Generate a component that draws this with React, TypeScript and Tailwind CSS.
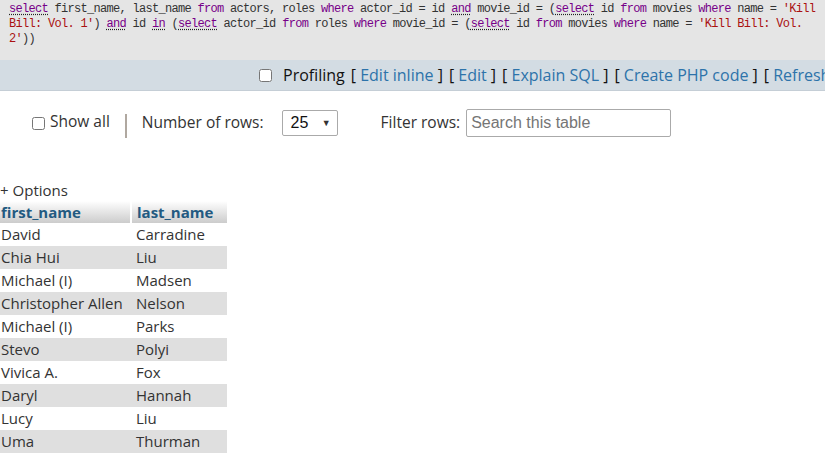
import React from "react";

const K = ({ children, doc }: { children: React.ReactNode; doc?: boolean }) => (
  <span className={doc ? "text-[#770088] underline decoration-dotted decoration-[#222] underline-offset-2" : "text-[#770088]"}>
    {children}
  </span>
);
const S = ({ children }: { children: React.ReactNode }) => <span className="text-[#aa1111]">{children}</span>;

const rows: [string, string][] = [
  ["David", "Carradine"],
  ["Chia Hui", "Liu"],
  ["Michael (I)", "Madsen"],
  ["Christopher Allen", "Nelson"],
  ["Michael (I)", "Parks"],
  ["Stevo", "Polyi"],
  ["Vivica A.", "Fox"],
  ["Daryl", "Hannah"],
  ["Lucy", "Liu"],
  ["Uma", "Thurman"],
];

const links = ["Edit inline", "Edit", "Explain SQL", "Create PHP code", "Refresh"];

export default function App() {
  return (
    <div className="w-[825px] h-[462px] overflow-hidden bg-white text-[#333] font-['Open_Sans',sans-serif]">
      {/* SQL query */}
      <div className="h-[60px] bg-[#e5e5e5] pl-[9px] pt-[2px] font-['Liberation_Mono',monospace] text-[12px] tracking-[-0.7px] leading-[15px] text-[#333] whitespace-pre">
        <div>
          <K doc>select</K> first_name, last_name <K>from</K> actors, roles <K>where</K> actor_id = id <K doc>and</K> movie_id = (<K doc>select</K> id <K>from</K> movies <K>where</K> name = <S>'Kill</S>
        </div>
        <div>
          <S>Bill: Vol. 1'</S>) <K doc>and</K> id <K doc>in</K> (<K doc>select</K> actor_id <K>from</K> roles <K>where</K> movie_id = (<K doc>select</K> id <K>from</K> movies <K>where</K> name = <S>'Kill Bill: Vol.</S>
        </div>
        <div>
          <S>2'</S>))
        </div>
      </div>

      {/* action bar (runs past the right edge, as in the page) */}
      <div className="h-[31px] bg-[#d3dce3] border-b border-[#c5ced6] flex items-center pl-[259px] whitespace-nowrap text-[16px] text-[#111]">
        <input type="checkbox" className="w-[13px] h-[13px] mr-[11px]" />
        <span>Profiling</span>
        {links.map((l, i) => (
          <span key={l} className="ml-[6px]">
            [&nbsp;<span className="text-[#2d73aa]">{l}</span>
            {i < links.length - 1 ? "\u00a0]" : ""}
          </span>
        ))}
      </div>

      {/* navigation controls */}
      <div className="flex items-center h-[64px] pl-[32px] text-[15.5px] text-[#333]">
        <input type="checkbox" className="w-[13px] h-[13px] mr-[5px]" />
        <span className="-mt-[2px]">Show all</span>
        <span className="w-[2px] h-[24px] bg-[#b0a8a0] ml-[15px] mr-[15px] mt-[6px]" />
        <span>Number of rows:</span>
        <div className="ml-[18px] w-[56px] h-[26px] border border-[#aaa] rounded-[2px] flex items-center justify-between pl-[8px] pr-[6px]">
          <span className="font-['Liberation_Sans',sans-serif] text-[16px] text-[#111]">25</span>
          <span className="text-[9px] text-[#333]">▼</span>
        </div>
        <span className="ml-[43px]">Filter rows:</span>
        <div className="ml-[6px] w-[205px] h-[28px] border border-[#aaa] rounded-[2px] flex items-center pl-[4px] font-['Liberation_Sans',sans-serif] text-[16px] text-[#757575]">
          Search this table
        </div>
      </div>

      {/* options */}
      <div className="mt-[25px] text-[15px] leading-[20px] text-[#333]">
        <span>+</span>
        <span className="ml-[4px]">Options</span>
      </div>

      {/* results table */}
      <div className="w-[227px] text-[15px] mt-[1px]">
        <div className="flex h-[22px] font-bold text-[#235a81]">
          <div className="w-[130px] pl-[1px] bg-gradient-to-b from-white to-[#cccccc] leading-[22px]">first_name</div>
          <div className="w-[2px]" />
          <div className="flex-1 pl-[5px] bg-gradient-to-b from-white to-[#cccccc] leading-[22px]">last_name</div>
        </div>
        {rows.map(([f, l], i) => (
          <div key={i} className={"flex h-[23px] leading-[23px] " + (i % 2 === 1 ? "bg-[#dfdfdf]" : "bg-white")}>
            <div className="w-[132px] pl-[1px] whitespace-nowrap">{f}</div>
            <div className="flex-1 pl-[4px]">{l}</div>
          </div>
        ))}
      </div>
    </div>
  );
}
